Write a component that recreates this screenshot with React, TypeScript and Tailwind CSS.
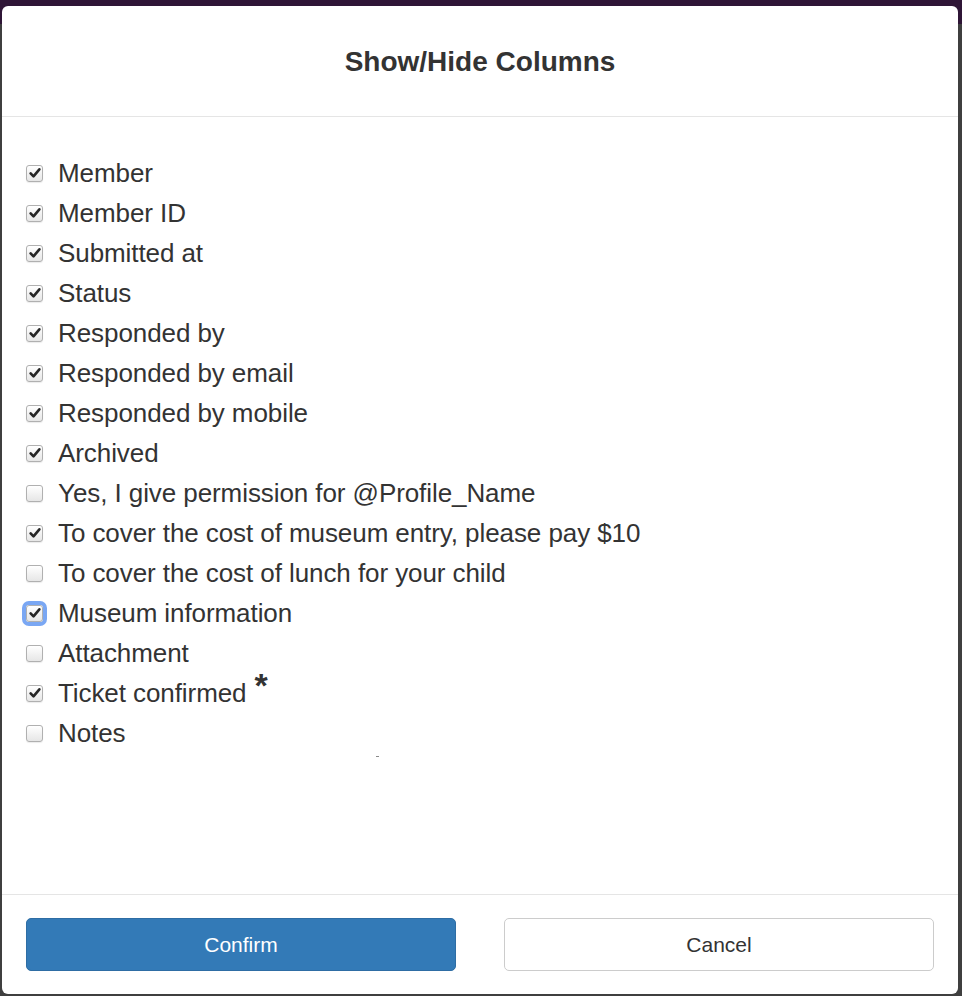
import React, { useState } from 'react';

type Column = { label: string; checked: boolean; required?: boolean };

const initialColumns: Column[] = [
    { label: 'Member', checked: true },
    { label: 'Member ID', checked: true },
    { label: 'Submitted at', checked: true },
    { label: 'Status', checked: true },
    { label: 'Responded by', checked: true },
    { label: 'Responded by email', checked: true },
    { label: 'Responded by mobile', checked: true },
    { label: 'Archived', checked: true },
    { label: 'Yes, I give permission for @Profile_Name', checked: false },
    { label: 'To cover the cost of museum entry, please pay $10', checked: true },
    { label: 'To cover the cost of lunch for your child', checked: false },
    { label: 'Museum information', checked: true },
    { label: 'Attachment', checked: false },
    { label: 'Ticket confirmed', checked: true, required: true },
    { label: 'Notes', checked: false },
];

const Checkbox: React.FC<{ checked: boolean; focused?: boolean }> = ({ checked, focused }) => (
    <span
        className={`flex h-[17px] w-[17px] shrink-0 items-center justify-center rounded-[3px] border border-[#b0b0b0] bg-[linear-gradient(#ffffff,#e6e6e6)] ${focused ? 'shadow-[0_0_0_4px_#7aa7f3]' : 'shadow-[0_1px_1px_rgba(0,0,0,0.08)]'}`}
    >
        {checked && (
            <svg viewBox="0 0 16 16" className="h-[14px] w-[14px]">
                <path d="M3 8.4 L6.3 11.8 L13 3.8" fill="none" stroke="#262626" strokeWidth="3" strokeLinecap="round" strokeLinejoin="round" />
            </svg>
        )}
    </span>
);

export default function App() {
    const [columns, setColumns] = useState<Column[]>(initialColumns);

    const toggle = (idx: number) => {
        setColumns(cols => cols.map((c, i) => (i === idx ? { ...c, checked: !c.checked } : c)));
    };

    return (
        <div
            className="h-[996px] w-[962px] overflow-hidden bg-[linear-gradient(#2f1536_0px,#2f1536_24px,#3f3f3f_24px)] pt-[6px] text-[#333]"
            style={{ fontFamily: '"Liberation Sans", Arial, Helvetica, sans-serif' }}
        >
            <div className="ml-[2px] flex h-[988px] w-[956px] flex-col rounded-[6px] bg-white">
                {/* Header */}
                <div className="flex h-[111px] shrink-0 items-center justify-center border-b border-[#e5e5e5] pt-[2px]">
                    <h2 className="text-[28px] font-bold">Show/Hide Columns</h2>
                </div>

                {/* Body */}
                <div className="flex-1 pl-[24px] pt-[36px]">
                    {columns.map((col, i) => (
                        <label
                            key={col.label}
                            className="flex h-10 cursor-pointer items-center gap-[15px] text-[26px] leading-[40px]"
                            onClick={() => toggle(i)}
                        >
                            <Checkbox checked={col.checked} focused={col.label === 'Museum information'} />
                            <span className="whitespace-nowrap tracking-[-0.08px]">
                                {col.label}
                                {col.required && (
                                    <span className="relative -top-[5px] ml-[8px] text-[34px] font-bold leading-none">*</span>
                                )}
                            </span>
                        </label>
                    ))}
                    <div className="ml-[350px] mt-[3px] h-[1px] w-[3px] bg-[#8a8a8a]" />
                </div>

                {/* Footer */}
                <div className="flex shrink-0 gap-12 border-t border-[#e5e5e5] px-6 pb-[23px] pt-[23px]">
                    <button className="h-[53px] flex-1 rounded-[5px] border border-[#2e6da4] bg-[#337ab7] text-[21px] text-white">
                        Confirm
                    </button>
                    <button className="h-[53px] flex-1 rounded-[5px] border border-[#cccccc] bg-white text-[21px] text-[#333]">
                        Cancel
                    </button>
                </div>
            </div>
        </div>
    );
}
